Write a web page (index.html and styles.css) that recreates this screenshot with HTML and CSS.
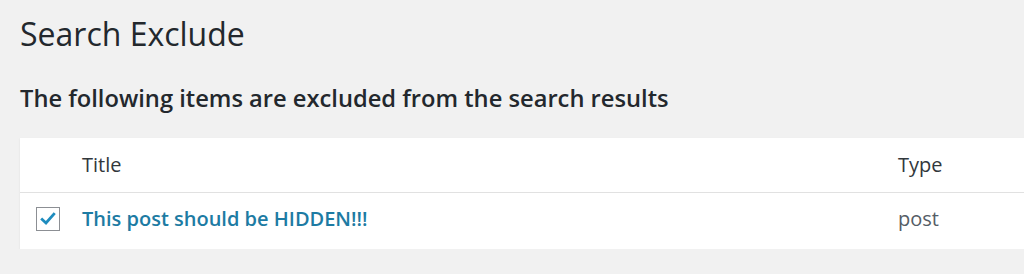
FILE: index.html
```html
<!DOCTYPE html>
<html>
<head>
<meta charset="utf-8">
<link rel="stylesheet" href="styles.css">
</head>
<body>
<div class="wrap">
  <h1 class="page-title">Search Exclude</h1>
  <h2 class="section-title">The following items are excluded from the search results</h2>
  <table class="list-table">
    <thead>
      <tr class="head-row">
        <th class="col-check"></th>
        <th class="col-title">Title</th>
        <th class="col-type">Type</th>
      </tr>
    </thead>
    <tbody>
      <tr class="body-row">
        <td class="col-check"><span class="checkbox"><svg viewBox="0 0 20 20" width="20" height="20"><path d="M4.2 10.4 L8 14 L15.8 5.2" fill="none" stroke="#1e8cbe" stroke-width="2.8" stroke-linecap="square"/></svg></span></td>
        <td class="col-title"><a class="row-link" href="#">This post should be HIDDEN!!!</a></td>
        <td class="col-type type-cell">post</td>
      </tr>
    </tbody>
  </table>
</div>
</body>
</html>
```

FILE: styles.css
```css
html, body {
  margin: 0;
  padding: 0;
  background: #f1f1f1;
  overflow: hidden;
}
body {
  font-family: "Open Sans", "Noto Sans", sans-serif;
  color: #23282d;
}
.wrap {
  padding: 12px 0 0 20px;
}
.page-title {
  margin: 0;
  font-size: 32px;
  font-weight: 400;
  line-height: 44px;
  color: #23282d;
}
.section-title {
  margin: 27px 0 0;
  font-size: 23.7px;
  font-weight: 600;
  line-height: 30px;
  color: #23282d;
}
.list-table {
  margin-top: 25px;
  width: 1040px;
  border-collapse: collapse;
  background: #fff;
  box-shadow: 0 1px 2px rgba(0,0,0,0.08);
}
.head-row {
  height: 54px;
}
.body-row {
  height: 57px;
}
.list-table th {
  text-align: left;
  font-weight: 400;
  font-size: 20px;
  color: #32373c;
  padding: 0;
  border-bottom: 1px solid #e1e1e1;
  vertical-align: middle;
}
.list-table td {
  padding: 0 0 4px;
  vertical-align: middle;
  font-size: 20px;
}
.col-check {
  width: 62px;
}
.col-type {
  width: 162px;
}
.checkbox {
  display: flex;
  align-items: center;
  justify-content: center;
  width: 22px;
  height: 22px;
  margin-left: 16px;
  border: 1px solid #8c8f94;
  box-sizing: content-box;
  background: #fff;
}
.row-link {
  color: #1d7ba3;
  font-weight: 600;
  text-decoration: none;
}
.type-cell {
  color: #555d66;
}
```
